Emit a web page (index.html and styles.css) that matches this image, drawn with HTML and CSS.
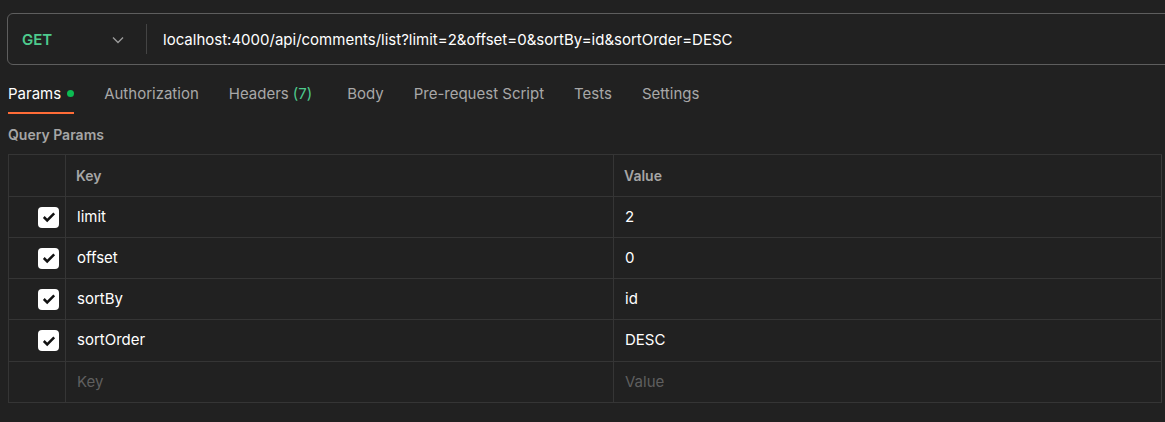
FILE: index.html
```html
<!DOCTYPE html>
<html>
<head>
<meta charset="utf-8">
<link rel="stylesheet" href="styles.css">
</head>
<body>
<div class="page">
  <div class="urlbar">
    <div class="method">
      <span class="method-name">GET</span>
      <svg class="chev" width="12" height="8" viewBox="0 0 12 8"><path d="M1 1.5 L6 6.5 L11 1.5" fill="none" stroke="#9a9a9a" stroke-width="1.4"/></svg>
    </div>
    <div class="sep"></div>
    <div class="url">localhost:4000/api/comments/list?limit=2&amp;offset=0&amp;sortBy=id&amp;sortOrder=DESC</div>
  </div>

  <div class="tabs">
    <div class="tab active">Params<span class="dot"></span></div>
    <div class="tab">Authorization</div>
    <div class="tab tab-headers">Headers <span class="count">(7)</span></div>
    <div class="tab">Body</div>
    <div class="tab">Pre-request Script</div>
    <div class="tab">Tests</div>
    <div class="tab">Settings</div>
  </div>

  <div class="section-title">Query Params</div>

  <div class="grid">
    <div class="cell chk"></div>
    <div class="cell head">Key</div>
    <div class="cell head last">Value</div>

    <div class="cell chk"><span class="box"><svg width="14" height="12" viewBox="0 0 14 12"><path d="M1.8 6 L5.2 9.4 L12.2 2.4" fill="none" stroke="#111" stroke-width="2.5"/></svg></span></div>
    <div class="cell">limit</div>
    <div class="cell last">2</div>

    <div class="cell chk"><span class="box"><svg width="14" height="12" viewBox="0 0 14 12"><path d="M1.8 6 L5.2 9.4 L12.2 2.4" fill="none" stroke="#111" stroke-width="2.5"/></svg></span></div>
    <div class="cell">offset</div>
    <div class="cell last">0</div>

    <div class="cell chk"><span class="box"><svg width="14" height="12" viewBox="0 0 14 12"><path d="M1.8 6 L5.2 9.4 L12.2 2.4" fill="none" stroke="#111" stroke-width="2.5"/></svg></span></div>
    <div class="cell">sortBy</div>
    <div class="cell last">id</div>

    <div class="cell chk"><span class="box"><svg width="14" height="12" viewBox="0 0 14 12"><path d="M1.8 6 L5.2 9.4 L12.2 2.4" fill="none" stroke="#111" stroke-width="2.5"/></svg></span></div>
    <div class="cell">sortOrder</div>
    <div class="cell last">DESC</div>

    <div class="cell chk"></div>
    <div class="cell placeholder">Key</div>
    <div class="cell placeholder last">Value</div>
  </div>
</div>
</body>
</html>
```

FILE: styles.css
```css
html, body {
  margin: 0;
  padding: 0;
  background: #212121;
  overflow: hidden;
}
body {
  width: 1165px;
  height: 422px;
  font-family: Inter, "Noto Sans", sans-serif;
  color: #ffffff;
}
.page {
  padding-top: 13px;
}
.urlbar {
  margin-left: 7px;
  width: 1200px;
  height: 50px;
  border: 1px solid #5e5e5e;
  border-radius: 6px;
  display: flex;
  align-items: center;
  box-sizing: content-box;
}
.method {
  width: 138px;
  display: flex;
  align-items: center;
  justify-content: space-between;
  padding-left: 14px;
  padding-right: 22px;
  box-sizing: border-box;
}
.method-name {
  color: #4ecb8d;
  font-weight: 600;
  font-size: 15px;
}
.chev { display: block; margin-top: 1px; }
.sep {
  width: 1px;
  height: 30px;
  background: #444;
}
.url {
  margin-left: 16px;
  font-size: 15px;
  color: #ffffff;
  white-space: nowrap;
}
.tabs {
  display: flex;
  gap: 30px;
  margin-top: 13px;
  padding-left: 8px;
  height: 36px;
}
.tab {
  font-size: 15px;
  color: #a8a8a8;
  display: flex;
  align-items: center;
  height: 30px;
  padding-bottom: 4px;
  border-bottom: 2px solid transparent;
}
.tab.active {
  color: #ffffff;
  border-bottom-color: #ff6c37;
}
.tab-headers { margin-right: 5px; }
.dot {
  display: inline-block;
  width: 7px;
  height: 7px;
  border-radius: 50%;
  background: #0cbb52;
  margin-left: 6px;
}
.count { color: #4ecb8d; margin-left: 4px; }
.section-title {
  margin-top: 12px;
  padding-left: 8px;
  font-size: 14px;
  font-weight: 600;
  color: #a6a6a6;
  height: 19px;
}
.grid {
  margin-top: 9px;
  margin-left: 8px;
  width: 1154px;
  display: grid;
  grid-template-columns: 57px 548px 1fr;
  grid-template-rows: 42px 41px 41px 41px 42px 41px;
  border-top: 1px solid #353535;
  border-left: 1px solid #353535;
  box-sizing: border-box;
}
.cell {
  border-right: 1px solid #353535;
  border-bottom: 1px solid #353535;
  display: flex;
  align-items: center;
  padding-left: 11px;
  padding-bottom: 2px;
  font-size: 15px;
  color: #ffffff;
}
.cell.chk {
  padding-left: 0;
  padding-bottom: 0;
  justify-content: flex-end;
  padding-right: 6px;
}
.cell.head {
  color: #a6a6a6;
  font-weight: 600;
  font-size: 14px;
  padding-left: 10px;
  padding-bottom: 0;
}
.cell.placeholder { color: #5f5f5f; }
.cell.last { border-right: 1px solid #3a3a3a; }
.box {
  width: 21px;
  height: 21px;
  border-radius: 4px;
  background: #ffffff;
  display: flex;
  align-items: center;
  justify-content: center;
}
```
